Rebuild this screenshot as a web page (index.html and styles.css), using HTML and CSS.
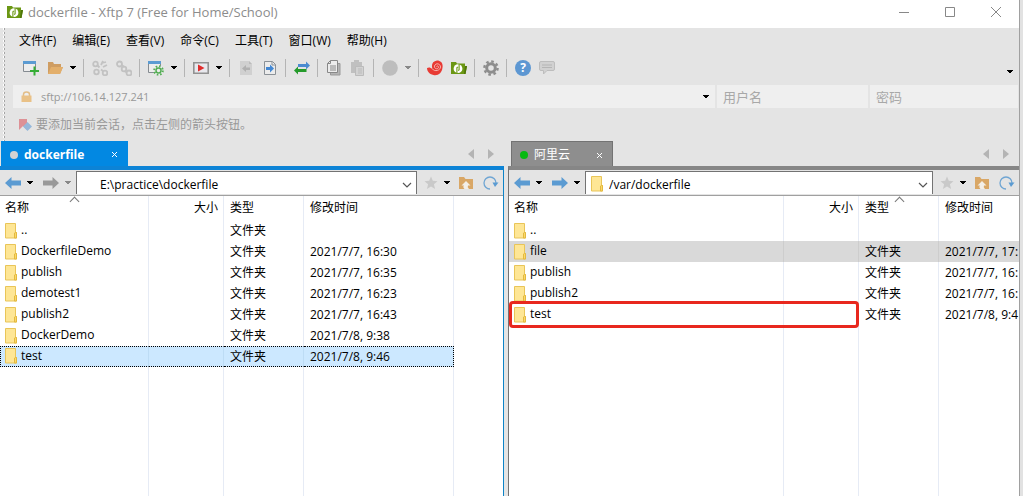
FILE: index.html
```
<!DOCTYPE html>
<html lang="zh-CN">
<head>
<meta charset="utf-8">
<title>dockerfile - Xftp 7</title>
<link rel="stylesheet" href="styles.css">
</head>
<body>
<svg class="defs" aria-hidden="true">
  <defs>
    <symbol id="folder" viewBox="0 0 14 17"><path d="M1.500 .5h10v9h1v5.500h-11z" fill="#fee695" stroke="#e9c558"/><path d="M10.500 10v5h2V9.500h-1z" fill="#fbd86a" stroke="#e3b93f"/></symbol>
    <symbol id="brand" viewBox="0 0 16 14"><path d="M0 1h5l1 1.500h8V5h2l-1.500 8H0z" fill="#6b9714"/><path d="M14 5h2l-1.500 8H13z" fill="#4f7609"/><circle cx="7" cy="7.700" r="4.400" fill="#fff"/><path d="M5.900 6.200v6.300M8.100 3v6.200M5.900 6.200h1.200M8.100 9.200H7" fill="none" stroke="#6b9714" stroke-width="1.100"/></symbol>
    <symbol id="arrow-left" viewBox="0 0 16 14"><path d="M0 7l6.500-6v3.500H16v5H6.500V13z" fill="currentColor"/></symbol>
    <symbol id="caret" viewBox="0 0 6 4"><path d="M0 0h6v1H5v1H4v1H2V2H1V1H0z" fill="currentColor"/></symbol>
    <symbol id="chevron" viewBox="0 0 10 6"><path d="M1 1l4 4 4-4" fill="none" stroke="#555" stroke-width="1.200"/></symbol>
    <symbol id="star" viewBox="0 0 14 14"><path d="M7 0.500l1.800 4.300 4.700.4-3.600 3 1.200 4.800L7 10.500 2.900 13l1.200-4.800-3.600-3 4.700-.4z" fill="#c9c9c9"/></symbol>
    <symbol id="up-folder" viewBox="0 0 15 14"><path d="M0 1h5l1.500 2H14v10H0z" fill="#d9a766"/><path d="M7 5l4.500 4.500h-2.500Q8 11 10 13H5.500Q3.500 11 5 9.500H2.500z" fill="#f3efe8"/></symbol>
    <symbol id="refresh" viewBox="0 0 16 14"><path d="M7 13A6 6 0 1 1 13 7" fill="none" stroke="#6fa5d3" stroke-width="1.300"/><path d="M9.500 6.500h6L12 11z" fill="#5b9bd2"/></symbol>
    <symbol id="gear" viewBox="0 0 16 16"><circle cx="8" cy="8" r="4.300" fill="none" stroke="currentColor" stroke-width="3"/><circle cx="8" cy="8" r="6.600" fill="none" stroke="currentColor" stroke-width="2.400" stroke-dasharray="2.600 2.584"/></symbol>
    <symbol id="doc" viewBox="0 0 16 16"><path d="M2.500 1.500h8l3 3v10h-11z" fill="#ececec" stroke="currentColor"/><path d="M10 1.500v3.500h3.500" fill="none" stroke="currentColor"/></symbol>
  </defs>
</svg>
<main class="window">
  <header class="titlebar">
    <svg class="brand"><use href="#brand"/></svg>
    <h1 class="title">dockerfile - Xftp 7 (Free for Home/School)</h1>
    <button class="win-button" aria-label="最小化"><svg viewBox="0 0 12 12"><path d="M1 6.500h10" stroke="#888"/></svg></button>
    <button class="win-button" aria-label="最大化"><svg viewBox="0 0 12 12"><path d="M1.500 1.500h9v9h-9z" fill="none" stroke="#888"/></svg></button>
    <button class="win-button" aria-label="关闭"><svg viewBox="0 0 12 12"><path d="M1 1l10 10M11 1L1 11" stroke="#888"/></svg></button>
  </header>

  <div class="chrome">
    <div class="grip"></div>
    <div class="bars">
      <nav class="menu">
        <button>文件(F)</button><button>编辑(E)</button><button>查看(V)</button><button>命令(C)</button><button>工具(T)</button><button>窗口(W)</button><button>帮助(H)</button>
      </nav>
      <div class="toolbar">
        <button class="tool" aria-label="新建"><svg viewBox="0 0 16 16"><path d="M.5 1.500h12v10H.5z" fill="#ededed" stroke="#858b91"/><path d="M0 1h13v3H0z" fill="#5b9bd2"/><path d="M11.500 6.500v9M7 11h9" stroke="#35ad35" stroke-width="2"/></svg></button>
        <button class="tool" aria-label="打开"><svg viewBox="0 0 16 16"><path d="M1 2h5l1 2h7v3h2l-3 7H1z" fill="#cf9d62"/><path d="M4 7h12l-3 7H1z" fill="#e3af6b"/></svg></button>
        <button class="drop" aria-label="打开选项"><svg><use href="#caret"/></svg></button>
        <i class="sep"></i>
        <button class="tool" aria-label="断开"><svg viewBox="0 0 16 16" fill="none" stroke="#c2c2c2" stroke-width="1.800"><circle cx="3.500" cy="4" r="2.300"/><circle cx="4.500" cy="12" r="2.300"/><circle cx="13" cy="13" r="2.300"/><path d="M5.500 5.500l2 2M9 9.500l2.500 2M9 5l2-4M11 7l4-2M10 3l4-1"/></svg></button>
        <button class="tool" aria-label="重新连接"><svg viewBox="0 0 16 16" fill="none" stroke="#c2c2c2" stroke-width="1.800"><circle cx="3.500" cy="4" r="2.500"/><circle cx="8" cy="9" r="2.300"/><circle cx="13" cy="13" r="2.500"/><path d="M5.500 5l3 2M9 11.500l2 1"/></svg></button>
        <i class="sep"></i>
        <button class="tool" aria-label="会话属性"><svg viewBox="0 0 16 16"><path d="M.5 1.500h12v11H.5z" fill="#ededed" stroke="#858b91"/><path d="M0 1h13v3H0z" fill="#5b9bd2"/><circle cx="10.500" cy="10.500" r="5" fill="#ececec"/><circle cx="10.500" cy="10.500" r="2.500" fill="none" stroke="#55ad55" stroke-width="1.500"/><circle cx="10.500" cy="10.500" r="4.300" fill="none" stroke="#55ad55" stroke-width="2" stroke-dasharray="1.600 1.777"/></svg></button>
        <button class="drop" aria-label="属性选项"><svg><use href="#caret"/></svg></button>
        <i class="sep"></i>
        <button class="tool" aria-label="运行"><svg viewBox="0 0 16 16"><path d="M.8 2.800h14.400v10.400H.8z" fill="#e8e8ed" stroke="#929292" stroke-width="1.600"/><path d="M5 4.500l6.500 3.500L5 11.500z" fill="#e02c2c"/></svg></button>
        <button class="drop" aria-label="运行选项"><svg><use href="#caret"/></svg></button>
        <i class="sep"></i>
        <button class="tool" aria-label="下载"><svg viewBox="0 0 16 16"><path d="M2 1h9l3 3v11H2z" fill="#d0d0d0"/><path d="M11 1v3h3" fill="#bbb"/><path d="M4 8.500l4-3.500v2.500h4v2.500H8V12z" fill="#b0b0b0"/></svg></button>
        <button class="tool" aria-label="上传"><svg viewBox="0 0 16 16" color="#8b9197"><use href="#doc"/><path d="M12 8.500L8 4.500v2.500H4v3h4v2.500z" fill="#4388d4"/></svg></button>
        <i class="sep"></i>
        <button class="tool" aria-label="同步"><svg viewBox="0 0 16 16"><path d="M16 5.500l-4-4v2.500H4v3h8v2.500z" fill="#4b8bd0"/><path d="M0 10.500l4-4v2.500h8.500v3H4v2.500z" fill="#259b2b"/></svg></button>
        <i class="sep"></i>
        <button class="tool" aria-label="复制"><svg viewBox="0 0 16 16"><path d="M12 3.500h2v11.500H4.500v-2" fill="#b5b5b5" stroke="#999"/><path d="M4.500.5h7v12h-10v-9z" fill="#ececec" stroke="#888"/><path d="M1.500 3.500h3v-3M4 6h6M4 8h6M4 10h6" fill="none" stroke="#888"/></svg></button>
        <button class="tool" aria-label="粘贴"><svg viewBox="0 0 16 16"><path d="M1 2h3V0h5v2h3v11H1z" fill="#c0c0c0"/><path d="M5.500 6.500h8v9h-8z" fill="#d2d2d2" stroke="#bbb"/><path d="M8 9h4M8 11h4M8 13h4" stroke="#bbb"/></svg></button>
        <i class="sep"></i>
        <button class="tool" aria-label="停止"><svg viewBox="0 0 16 16"><circle cx="8" cy="8" r="7.800" fill="#bdbdbd"/></svg></button>
        <button class="drop muted" aria-label="停止选项"><svg><use href="#caret"/></svg></button>
        <i class="sep"></i>
        <button class="tool" aria-label="Xshell"><svg viewBox="0 0 16 16"><path d="M0 8c2-1 3.500-.5 5.500 1C4 5 5.500 1 10 .5c4 0 6.200 3 5.500 7C15 13 11 16 6.500 15 2 14 0 11 0 8z" fill="#e83b34"/><path d="M5.500 9c2 3 8 1.500 8-2 0-3.500-5-4.500-6-1-.6 2.500 3 4 4 1.500.3-1.500-1.500-2-2-1" fill="none" stroke="#f7b4ae"/></svg></button>
        <button class="tool" aria-label="Xftp"><svg class="brand"><use href="#brand"/></svg></button>
        <i class="sep"></i>
        <button class="tool gear" aria-label="选项"><svg><use href="#gear"/></svg></button>
        <i class="sep"></i>
        <button class="tool help" aria-label="帮助"><span>?</span></button>
        <button class="tool" aria-label="反馈"><svg viewBox="0 0 16 16"><path d="M2 1.500h12q1.500 0 1.500 1.500v6q0 1.500-1.500 1.500H8L4.500 14v-3.500H2Q.5 10.500.5 9V3Q.5 1.500 2 1.500z" fill="#d1d1d1" stroke="#bdbdbd"/><path d="M3 5h10M3 7.500h10" stroke="#b5b5b5"/></svg></button>
        <button class="drop overflow" aria-label="更多"><svg><use href="#caret"/></svg></button>
      </div>
      <form class="address">
        <label class="field host"><svg viewBox="0 0 11 12"><path d="M2.500 5V3.500q0-2.500 3-2.500t3 2.500V5" fill="none" stroke="#e2bd87" stroke-width="1.500"/><path d="M.5 4.500h10V11H.5z" fill="#e9c187"/></svg><input type="text" value="sftp://106.14.127.241" aria-label="地址"><button type="button" class="drop" aria-label="历史"><svg><use href="#caret"/></svg></button></label>
        <label class="field user"><input type="text" placeholder="用户名" aria-label="用户名"></label>
        <label class="field pass"><input type="password" placeholder="密码" aria-label="密码"></label>
      </form>
      <p class="hint"><svg viewBox="0 0 13 13"><path d="M0 1h8v11L4 8l-4 4z" fill="#dd9196"/><path d="M4 8.500L8.500 4 13 8.500 8.500 13z" fill="#96b8da"/></svg>要添加当前会话，点击左侧的箭头按钮。</p>
    </div>
  </div>

  <div class="panes">
    <section class="pane local">
      <div class="tabs">
        <div class="tab"><i class="dot"></i><span class="tab-name">dockerfile</span><button class="close" aria-label="关闭标签"><svg viewBox="0 0 7 7"><path d="M1 1l5 5M6 1L1 6" stroke="#fff"/></svg></button></div>
        <div class="tab-nav"><button aria-label="上一个"><svg viewBox="0 0 6 10"><path d="M6 0v10L0 5z" fill="#b4b4b4"/></svg></button><button aria-label="下一个"><svg viewBox="0 0 6 10"><path d="M0 0v10l6-5z" fill="#b4b4b4"/></svg></button></div>
      </div>
      <div class="pane-body">
        <div class="pathbar">
          <button class="nav" aria-label="后退"><svg><use href="#arrow-left"/></svg></button><button class="drop" aria-label="后退历史"><svg><use href="#caret"/></svg></button>
          <button class="nav forward off" aria-label="前进"><svg><use href="#arrow-left"/></svg></button><button class="drop muted" aria-label="前进历史"><svg><use href="#caret"/></svg></button>
          <div class="path"><i class="folder"></i><input type="text" value="E:\practice\dockerfile" aria-label="本地路径"><button class="expand" aria-label="展开"><svg><use href="#chevron"/></svg></button></div>
          <button class="star" aria-label="书签"><svg><use href="#star"/></svg></button><button class="drop" aria-label="书签列表"><svg><use href="#caret"/></svg></button>
          <button class="up" aria-label="上级"><svg><use href="#up-folder"/></svg></button><button class="refresh" aria-label="刷新"><svg><use href="#refresh"/></svg></button>
        </div>
        <div class="list">
          <table>
            <colgroup><col class="c-name"><col class="c-size"><col class="c-type"><col class="c-date"><col></colgroup>
            <thead><tr><th class="sorted">名称</th><th class="size">大小</th><th>类型</th><th>修改时间</th><th class="rest"></th></tr></thead>
            <tbody>
              <tr><td><svg class="folder"><use href="#folder"/></svg>..</td><td></td><td>文件夹</td><td></td><td class="rest"></td></tr>
              <tr><td><svg class="folder"><use href="#folder"/></svg>DockerfileDemo</td><td></td><td>文件夹</td><td>2021/7/7, 16:30</td><td class="rest"></td></tr>
              <tr><td><svg class="folder"><use href="#folder"/></svg>publish</td><td></td><td>文件夹</td><td>2021/7/7, 16:35</td><td class="rest"></td></tr>
              <tr><td><svg class="folder"><use href="#folder"/></svg>demotest1</td><td></td><td>文件夹</td><td>2021/7/7, 16:23</td><td class="rest"></td></tr>
              <tr><td><svg class="folder"><use href="#folder"/></svg>publish2</td><td></td><td>文件夹</td><td>2021/7/7, 16:43</td><td class="rest"></td></tr>
              <tr><td><svg class="folder"><use href="#folder"/></svg>DockerDemo</td><td></td><td>文件夹</td><td>2021/7/8, 9:38</td><td class="rest"></td></tr>
              <tr class="selected"><td><svg class="folder"><use href="#folder"/></svg>test</td><td></td><td>文件夹</td><td>2021/7/8, 9:46</td><td class="rest"></td></tr>
              <tr class="filler"><td></td><td></td><td></td><td></td><td class="rest"></td></tr>
            </tbody>
          </table>
        </div>
      </div>
    </section>

    <section class="pane remote">
      <div class="tabs">
        <div class="tab"><i class="dot"></i><span class="tab-name">阿里云</span><button class="close" aria-label="关闭标签"><svg viewBox="0 0 7 7"><path d="M1 1l5 5M6 1L1 6" stroke="#fff"/></svg></button></div>
        <div class="tab-nav"><button aria-label="上一个"><svg viewBox="0 0 6 10"><path d="M6 0v10L0 5z" fill="#b4b4b4"/></svg></button><button aria-label="下一个"><svg viewBox="0 0 6 10"><path d="M0 0v10l6-5z" fill="#b4b4b4"/></svg></button></div>
      </div>
      <div class="pane-body">
        <div class="pathbar">
          <button class="nav" aria-label="后退"><svg><use href="#arrow-left"/></svg></button><button class="drop" aria-label="后退历史"><svg><use href="#caret"/></svg></button>
          <button class="nav forward" aria-label="前进"><svg><use href="#arrow-left"/></svg></button><button class="drop" aria-label="前进历史"><svg><use href="#caret"/></svg></button>
          <div class="path"><svg class="folder"><use href="#folder"/></svg><input type="text" value="/var/dockerfile" aria-label="远程路径"><button class="expand" aria-label="展开"><svg><use href="#chevron"/></svg></button></div>
          <button class="star" aria-label="书签"><svg><use href="#star"/></svg></button><button class="drop" aria-label="书签列表"><svg><use href="#caret"/></svg></button>
          <button class="up" aria-label="上级"><svg><use href="#up-folder"/></svg></button><button class="refresh" aria-label="刷新"><svg><use href="#refresh"/></svg></button>
        </div>
        <div class="list">
          <table>
            <colgroup><col class="c-name"><col class="c-size"><col class="c-type"><col></colgroup>
            <thead><tr><th>名称</th><th class="size">大小</th><th class="sorted">类型</th><th class="rest">修改时间</th></tr></thead>
            <tbody>
              <tr><td><svg class="folder"><use href="#folder"/></svg>..</td><td></td><td></td><td class="rest"></td></tr>
              <tr class="hover"><td><svg class="folder"><use href="#folder"/></svg>file</td><td></td><td>文件夹</td><td class="rest">2021/7/7, 17:</td></tr>
              <tr><td><svg class="folder"><use href="#folder"/></svg>publish</td><td></td><td>文件夹</td><td class="rest">2021/7/7, 16:</td></tr>
              <tr><td><svg class="folder"><use href="#folder"/></svg>publish2</td><td></td><td>文件夹</td><td class="rest">2021/7/7, 16:</td></tr>
              <tr><td class="marked"><svg class="folder"><use href="#folder"/></svg>test</td><td></td><td>文件夹</td><td class="rest">2021/7/8, 9:4</td></tr>
              <tr class="filler"><td></td><td></td><td></td><td class="rest"></td></tr>
            </tbody>
          </table>
        </div>
      </div>
    </section>
  </div>
</main>
</body>
</html>
```
FILE: styles.css
```
* { box-sizing: border-box; }
html, body { height: 100%; }
body {
  margin: 0;
  padding-right: 3px;
  background: #e2e2e2;
  color: #000;
  font: 12px/16px "Open Sans", "Noto Sans CJK SC", sans-serif;
  overflow: hidden;
}
button, input { font: inherit; color: inherit; border: 0; padding: 0; margin: 0; background: none; }
button { display: flex; align-items: center; justify-content: center; flex: none; }
input { min-width: 0; flex: 1; outline: 0; }
svg { display: block; flex: none; }
.defs { position: absolute; width: 0; height: 0; }

.window {
  display: flex;
  flex-direction: column;
  height: 100%;
  border-right: 1px solid #a0a0a0;
  background: #e4e4e4;
}

.titlebar { display: flex; align-items: center; height: 28px; padding: 0 0 4px 7px; background: #fff; }
.brand { width: 16px; height: 14px; }
.title { flex: 1; margin: 0 0 0 5px; font-size: 13px; font-weight: 400; color: #8c8c8c; white-space: nowrap; }
.win-button { width: 46px; height: 24px; }
.win-button svg { width: 12px; height: 12px; }

.chrome { display: flex; }
.grip {
  width: 13px;
  background:
    linear-gradient(#a4a4a4, #a4a4a4) 4px 0 / 1px 100% no-repeat,
    linear-gradient(#fff, #fff) 3px 0 / 1px 100% no-repeat;
  -webkit-mask: repeating-linear-gradient(#000 0 2px, transparent 2px 4px);
  mask: repeating-linear-gradient(#000 0 2px, transparent 2px 4px);
}
.bars { flex: 1; min-width: 0; }
.menu { display: flex; gap: 16px; height: 26px; padding-left: 6px; align-items: center; }
.toolbar { display: flex; height: 31px; padding: 0 2px 3px 6px; align-items: center; }
.tool { width: 24px; height: 24px; }
.tool svg { width: 16px; height: 16px; }
.tool .brand { height: 14px; }
.gear { color: #8d8d8d; }
.help span { width: 16px; height: 16px; border-radius: 50%; background: #5d97d2; color: #fff; font-weight: 700; text-align: center; }
.drop { width: 13px; height: 16px; padding-right: 2px; color: #000; }
.drop svg { width: 6px; height: 4px; }
.drop.muted { color: #888; }
.overflow { margin: 8px 0 0 auto; }
.sep { width: 8px; height: 18px; background: linear-gradient(#b4b4b4, #b4b4b4) 3px 0 / 1px 100% no-repeat; }

.address { display: flex; gap: 2px; padding-right: 1px; }
.field { display: flex; align-items: center; height: 23px; background: #efefef; color: #999; }
.host { flex: 1; min-width: 0; padding: 0 2px 0 8px; font-size: 11px; }
.host > svg { width: 11px; height: 12px; margin-right: 9px; }
.user { width: 151px; padding-left: 6px; }
.pass { width: 148px; padding-left: 6px; }
.user, .pass { font-size: 13px; }
.field input { width: 100%; }
.field input::placeholder { color: #a8a8a8; opacity: 1; }
.hint { display: flex; align-items: center; gap: 4px; height: 33px; margin: 0; padding-left: 6px; color: #999; }
.hint svg { width: 13px; height: 13px; }

.panes { flex: 1; display: flex; gap: 4px; min-height: 0; }
.pane { display: flex; flex-direction: column; min-width: 0; }
.local { flex: 504 1 0; }
.remote { flex: 511 1 0; }
.tabs { display: flex; align-items: stretch; justify-content: space-between; height: 25px; }
.tab { display: flex; align-items: center; color: #fff; }
.local .tab { width: 127px; margin-left: 1px; padding: 2px 10px 0 9px; background: #0288e2; font-weight: 700; }
.remote .tab { width: 102px; margin-left: 3px; padding: 2px 9px 0 8px; background: #8e8e8e; border: solid #737373; border-width: 1px 1px 0; }
.dot { width: 8px; height: 8px; border-radius: 50%; margin-right: 6px; background: #d2d2d2; }
.remote .dot { background: #05b910; }
.tab-name { flex: 1; }
.close svg { width: 7px; height: 7px; }
.tab-nav { display: flex; gap: 14px; padding-right: 10px; }
.tab-nav svg { width: 6px; height: 10px; }

.pane-body { flex: 1; display: flex; flex-direction: column; min-height: 0; }
.local .pane-body { border-top: 4px solid #0c83d6; border-right: 1px solid #0c83c8; }
.remote .pane-body { border-top: 4px solid #868686; border-left: 1px solid #737373; }
.pathbar { display: flex; align-items: center; height: 26px; border-bottom: 1px solid #a0a0a0; }
.nav { width: 16px; margin-left: 5px; color: #5b9bd2; }
.nav svg { width: 16px; height: 14px; }
.nav.off { color: #999; }
.forward svg { transform: scaleX(-1); }
.pathbar .drop { width: 17px; padding: 0; }
.path {
  flex: 1;
  display: flex;
  align-items: center;
  align-self: stretch;
  min-width: 0;
  margin: 1px 0;
  padding: 0 4px;
  border: solid #737373;
  border-width: 1px 1px 0;
  background: #fff;
}
.path input { padding-top: 3px; }
.folder { display: block; width: 14px; height: 17px; margin-right: 5px; }
.path .folder { margin-top: 2px; }
.expand svg { width: 10px; height: 6px; margin-top: 4px; }
.star svg { width: 14px; height: 14px; }
.star { margin-left: 7px; }
.up { margin: 0 9px 0 4px; }
.up svg { width: 15px; height: 14px; }
.refresh { margin-right: 4px; }
.refresh svg { width: 16px; height: 14px; }

.list { flex: 1; min-height: 0; overflow: hidden; background: #fff; }
table { width: 100%; height: 100%; table-layout: fixed; border-spacing: 0; }
.local .c-name { width: 149px; }
.remote .c-name { width: 275px; }
.c-size { width: 75px; }
.c-type { width: 80px; }
.c-date { width: 150px; }
th, td { height: 21px; padding: 0 0 0 6px; border-right: 1px solid #e6ebf5; font-weight: 400; text-align: left; white-space: nowrap; }
th { height: 24px; }
th:first-child { padding-left: 5px; }
td:first-child { padding-left: 4px; }
th.size { text-align: right; padding-right: 5px; }
th.sorted { position: relative; }
th.sorted::before {
  content: "";
  position: absolute;
  top: 2px;
  left: calc(50% - 3px);
  width: 6px;
  height: 6px;
  border: solid #777;
  border-width: 1px 0 0 1px;
  transform: rotate(45deg);
}
.rest { border-right: 0; overflow: hidden; }
td { line-height: 17px; }
td .folder { display: inline-block; margin-right: 3px; vertical-align: middle; }
.filler td { height: auto; }
.hover td { background: #d9d9d9; border-right-color: #cdcdcd; }
.selected td { line-height: 15px; }
.selected td:not(.rest) { background: #cce8ff; border-top: 1px dotted #000; border-bottom: 1px dotted #000; border-right-color: #bddcf5; }
.selected td:first-child { border-left: 1px dotted #000; padding-left: 3px; }
.selected td:nth-child(4) { border-right: 1px dotted #000; }
.marked { position: relative; }
.marked::after {
  content: "";
  position: absolute;
  inset: -3px -76px -3px 0;
  border: 3px solid #e8281e;
  border-radius: 4px;
}
```
